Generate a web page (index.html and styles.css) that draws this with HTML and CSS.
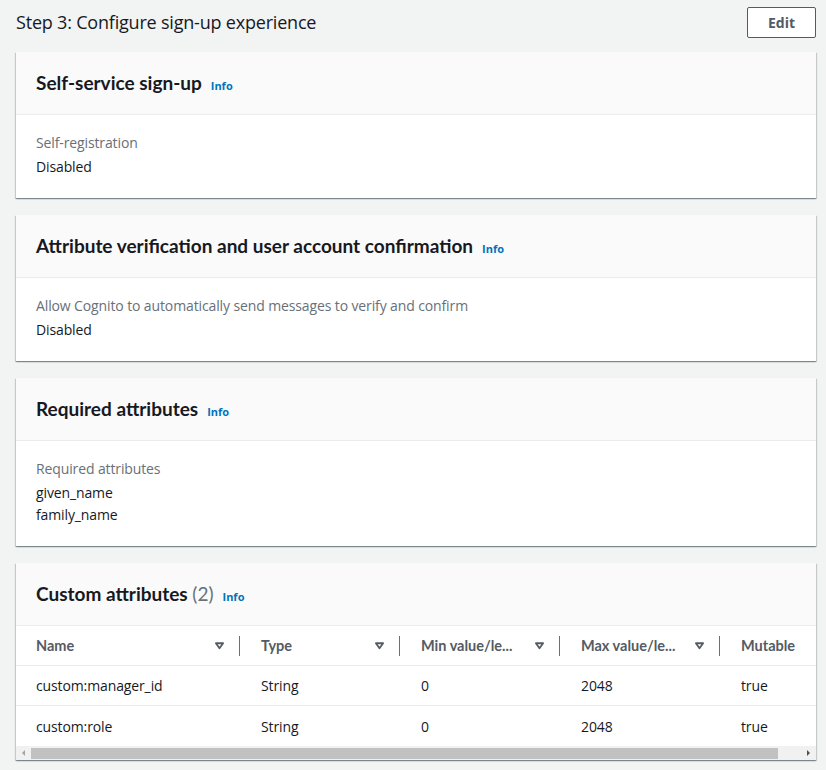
FILE: index.html
```html
<!DOCTYPE html>
<html>
<head>
<meta charset="utf-8">
<link rel="stylesheet" href="styles.css">
</head>
<body>
<div class="page">
  <div class="step-head">
    <h2 class="step-title">Step 3: Configure sign-up experience</h2>
    <button class="btn">Edit</button>
  </div>

  <section class="container">
    <div class="c-head"><h3>Self-service sign-up</h3><a class="info">Info</a></div>
    <div class="c-body">
      <div class="label">Self-registration</div>
      <div class="value">Disabled</div>
    </div>
  </section>

  <section class="container">
    <div class="c-head"><h3>Attribute verification and user account confirmation</h3><a class="info">Info</a></div>
    <div class="c-body">
      <div class="label">Allow Cognito to automatically send messages to verify and confirm</div>
      <div class="value">Disabled</div>
    </div>
  </section>

  <section class="container">
    <div class="c-head"><h3>Required attributes</h3><a class="info">Info</a></div>
    <div class="c-body">
      <div class="label">Required attributes</div>
      <div class="value">given_name</div>
      <div class="value">family_name</div>
    </div>
  </section>

  <section class="container">
    <div class="c-head"><h3>Custom attributes <span class="count">(2)</span></h3><a class="info">Info</a></div>
    <div class="table">
      <div class="tr th">
        <div class="cell c1"><span>Name</span><svg class="sort" viewBox="0 0 12 10" width="11" height="9"><path d="M2 2.5h8L6 8z" fill="none" stroke="#545b64" stroke-width="2" stroke-linejoin="round"/></svg><i class="div"></i></div>
        <div class="cell c2"><span>Type</span><svg class="sort" viewBox="0 0 12 10" width="11" height="9"><path d="M2 2.5h8L6 8z" fill="none" stroke="#545b64" stroke-width="2" stroke-linejoin="round"/></svg><i class="div"></i></div>
        <div class="cell c2"><span>Min value/le...</span><svg class="sort" viewBox="0 0 12 10" width="11" height="9"><path d="M2 2.5h8L6 8z" fill="none" stroke="#545b64" stroke-width="2" stroke-linejoin="round"/></svg><i class="div"></i></div>
        <div class="cell c2"><span>Max value/le...</span><svg class="sort" viewBox="0 0 12 10" width="11" height="9"><path d="M2 2.5h8L6 8z" fill="none" stroke="#545b64" stroke-width="2" stroke-linejoin="round"/></svg><i class="div"></i></div>
        <div class="cell c5"><span>Mutable</span></div>
      </div>
      <div class="tr">
        <div class="cell c1">custom:manager_id</div>
        <div class="cell c2">String</div>
        <div class="cell c2">0</div>
        <div class="cell c2">2048</div>
        <div class="cell c5">true</div>
      </div>
      <div class="tr last">
        <div class="cell c1">custom:role</div>
        <div class="cell c2">String</div>
        <div class="cell c2">0</div>
        <div class="cell c2">2048</div>
        <div class="cell c5">true</div>
      </div>
    </div>
    <div class="hscroll">
      <div class="arrow left"></div>
      <div class="thumb"></div>
      <div class="track"></div>
      <div class="arrow right"></div>
    </div>
  </section>
</div>
</body>
</html>
```
FILE: styles.css
```css
* { box-sizing: border-box; }
html, body { margin: 0; padding: 0; }
body {
  background: #f2f3f3;
  font-family: "Open Sans", "Noto Sans", sans-serif;
  font-size: 14px;
  letter-spacing: -0.12px;
  color: #16191f;
  width: 826px;
  height: 770px;
  overflow: hidden;
}
.page { padding: 0 10px 0 16px; }
.step-head {
  display: flex;
  justify-content: space-between;
  align-items: flex-start;
  height: 52px;
  padding-top: 7px;
}
.step-title {
  margin: 0;
  font-size: 18px;
  font-weight: 400;
  letter-spacing: -0.2px;
  line-height: 30px;
  color: #16191f;
}
.btn {
  width: 69px;
  height: 31px;
  background: #fff;
  border: 1px solid #545b64;
  border-radius: 2px;
  font-family: inherit;
  font-size: 14px;
  font-weight: 700;
  color: #545b64;
  padding: 0;
}
.container {
  background: #fff;
  box-shadow: 0 1px 1px 0 rgba(0,28,36,.3), 1px 1px 1px 0 rgba(0,28,36,.15), -1px 1px 1px 0 rgba(0,28,36,.15);
  margin-bottom: 17.5px;
}
.c-head {
  background: #fafafa;
  border-bottom: 1px solid #eaeded;
  padding: 19px 20px 19px;
  display: flex;
  align-items: baseline;
  gap: 9px;
}
.c-head h3 {
  margin: 0;
  font-family: "Lato", "Open Sans", sans-serif;
  font-size: 19px;
  font-weight: 700;
  letter-spacing: 0;
  line-height: 24px;
}
.count { font-weight: 400; color: #687078; }
.info {
  font-size: 11px;
  font-weight: 700;
  letter-spacing: 0;
  color: #0073bb;
}
.c-body { padding: 17px 20px 19.5px; }
.label { color: #687078; line-height: 22px; margin-bottom: 2px; }
.value { line-height: 22px; }
.tr { display: flex; height: 40px; border-bottom: 1px solid #eaeded; align-items: center; }
.tr.last { border-bottom: none; }
.th {
  font-family: "Lato", "Open Sans", sans-serif;
  font-size: 14.5px;
  letter-spacing: 0;
  font-weight: 700;
  color: #545b64;
}
.cell { display: flex; align-items: center; height: 100%; }
.c1 { width: 224px; padding-left: 20px; }
.c2 { width: 160px; padding-left: 21px; }
.c5 { flex: 1; padding-left: 21px; }
.th .cell span { flex: 1; }
.sort { margin-right: 14px; }
.div {
  width: 1px;
  height: 20px;
  background: #687078;
  display: block;
}
.hscroll {
  display: flex;
  height: 14px;
  background: #f1f1f1;
}
.arrow { width: 15px; position: relative; }
.arrow.left::after, .arrow.right::after {
  content: "";
  position: absolute;
  top: 4px;
  border-top: 3px solid transparent;
  border-bottom: 3px solid transparent;
}
.arrow.left::after { left: 6px; border-right: 3px solid #a3a3a3; }
.arrow.right::after { right: 6px; border-left: 3px solid #505050; }
.thumb { width: 747px; background: #c1c1c1; margin: 2px 0 1px; }
.track { flex: 1; }
```
